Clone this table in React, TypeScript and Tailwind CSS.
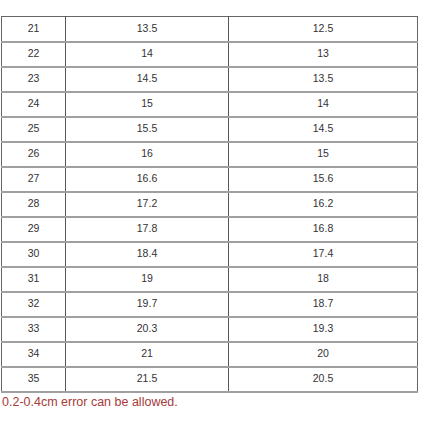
import React from 'react';

const rows: [string, string, string][] = [
  ['21', '13.5', '12.5'],
  ['22', '14', '13'],
  ['23', '14.5', '13.5'],
  ['24', '15', '14'],
  ['25', '15.5', '14.5'],
  ['26', '16', '15'],
  ['27', '16.6', '15.6'],
  ['28', '17.2', '16.2'],
  ['29', '17.8', '16.8'],
  ['30', '18.4', '17.4'],
  ['31', '19', '18'],
  ['32', '19.7', '18.7'],
  ['33', '20.3', '19.3'],
  ['34', '21', '20'],
  ['35', '21.5', '20.5'],
];

const App: React.FC = () => {
  return (
    <div className="w-[430px] h-[430px] bg-white pt-[16px] pl-[1px] font-['Liberation_Sans',Arial,sans-serif]">
      <table className="border-collapse border-[1.5px] border-[#666] text-[10.5px] text-[#333]">
        <tbody>
          {rows.map((r) => (
            <tr key={r[0]} className="h-[25px] border-b-2 border-[#a0a0a0]">
              <td className="w-[64px] p-0 text-center border-r border-[#555]">{r[0]}</td>
              <td className="w-[163px] p-0 text-center border-r border-[#555]">{r[1]}</td>
              <td className="w-[189px] p-0 text-center">{r[2]}</td>
            </tr>
          ))}
        </tbody>
      </table>
      <p className="mt-[1px] pl-[1px] text-[12.5px] leading-[16px] text-[#a83a3a]">
        0.2-0.4cm error can be allowed.
      </p>
    </div>
  );
};

export default App;
